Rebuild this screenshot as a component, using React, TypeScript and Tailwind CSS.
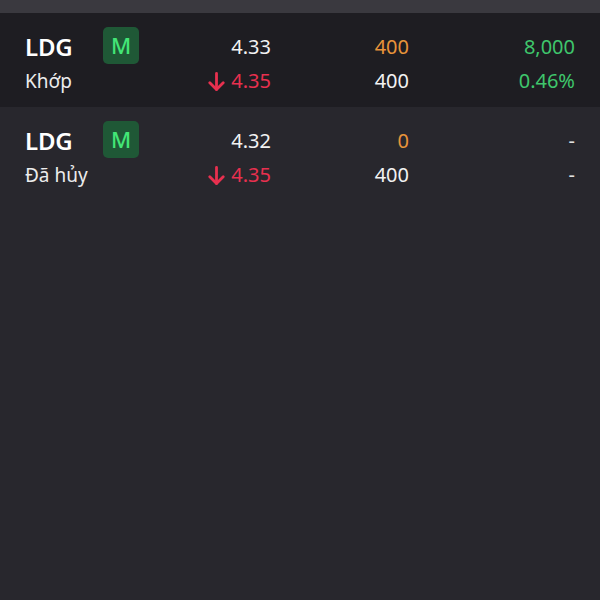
import React from "react";

type Row = {
  sym: string;
  status: string;
  price: string;
  ref: string;
  qty: string;
  qty2: string;
  val: string;
  val2: string;
  dark: boolean;
  green: boolean;
};

const rows: Row[] = [
  { sym: "LDG", status: "Khớp", price: "4.33", ref: "4.35", qty: "400", qty2: "400", val: "8,000", val2: "0.46%", dark: true, green: true },
  { sym: "LDG", status: "Đã hủy", price: "4.32", ref: "4.35", qty: "0", qty2: "400", val: "-", val2: "-", dark: false, green: false },
];

function DownArrow() {
  return (
    <svg width="17" height="19" viewBox="0 0 17 19" fill="none" stroke="#e8304f" strokeWidth="2.8" strokeLinecap="round" strokeLinejoin="round">
      <path d="M8.5 1.5v16" />
      <path d="M1.8 10.8l6.7 6.7 6.7-6.7" />
    </svg>
  );
}

export default function App() {
  return (
    <div
      className="w-[600px] h-[600px] bg-[#28272d] flex flex-col overflow-hidden"
      style={{ fontFamily: '"Noto Sans", "Open Sans", sans-serif' }}
    >
      <div className="h-[13px] bg-[#3a393f] shrink-0" />
      {rows.map((r, i) => (
        <div
          key={i}
          className={`flex h-[94px] pt-[17px] pl-[25px] pr-[25px] ${r.dark ? "bg-[#1e1d22]" : "bg-[#28272d]"}`}
        >
          <div className="w-[78px] flex flex-col">
            <div className="h-[34px] flex items-center text-[24px] font-semibold text-white tracking-[-0.2px]">{r.sym}</div>
            <div className="h-[34px] flex items-center text-[19px] text-[#ececec]">{r.status}</div>
          </div>
          <div className="w-[36px] -mt-[3px]">
            <div className="w-[36px] h-[37px] rounded-[5px] bg-[#1f5836] flex items-center justify-center text-[22px] font-medium text-[#43e676]">
              M
            </div>
          </div>
          <div className="w-[132px] flex flex-col items-end text-[20px]">
            <div className="h-[34px] flex items-center text-[#f2f2f2]">{r.price}</div>
            <div className="h-[34px] flex items-center gap-[6px] text-[#e8304f]">
              <DownArrow />
              <span>{r.ref}</span>
            </div>
          </div>
          <div className="w-[138px] flex flex-col items-end text-[20px]">
            <div className="h-[34px] flex items-center text-[#e8943a]">{r.qty}</div>
            <div className="h-[34px] flex items-center text-[#f2f2f2]">{r.qty2}</div>
          </div>
          <div className="flex-1 flex flex-col items-end text-[20px]">
            <div className={`h-[34px] flex items-center ${r.green ? "text-[#3fc66c]" : "text-[#e0e0e0]"}`}>{r.val}</div>
            <div className={`h-[34px] flex items-center ${r.green ? "text-[#3fc66c]" : "text-[#e0e0e0]"}`}>{r.val2}</div>
          </div>
        </div>
      ))}
    </div>
  );
}
